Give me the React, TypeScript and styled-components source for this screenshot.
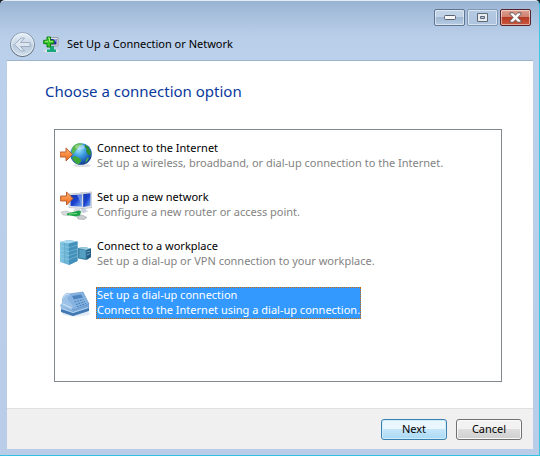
import React, { useState } from "react";
import styled, { createGlobalStyle, css } from "styled-components";

const GlobalStyle = createGlobalStyle`
  *, *::before, *::after { box-sizing: border-box; }
  body { margin: 0; background: #14202c; font-family: "Noto Sans", "Open Sans", sans-serif; font-size: 11px; color: #000; }
  button { font: inherit; }
  svg { display: block; flex: none; }
`;

const Frame = styled.div`
  display: flex;
  flex-direction: column;
  min-height: 100vh;
  padding: 0 6px 6px 7px;
  border-top: 1px solid #e4edf6;
  border-right: 1px solid #3fc3e6;
  border-bottom: 1px solid #35bfe0;
  border-radius: 5px 5px 0 0;
  background: linear-gradient(#98b4d2 0, #a9c1de 16px, #b9cee9 36px, #bbd0ea 60px, #b9cde8 100%);
`;

const TitleBar = styled.header`
  display: flex;
  flex-direction: column;
  height: 59px;
`;

const CaptionButtons = styled.div`
  display: flex;
  justify-content: flex-end;
  align-items: flex-end;
  gap: 2px;
  height: 25px;
  padding-right: 2px;
`;

const CaptionButton = styled.button<{ $kind: "normal" | "disabled" | "close" }>`
  display: flex;
  align-items: center;
  justify-content: center;
  width: 31px;
  height: 17px;
  padding: 0;
  border: 1px solid #60758f;
  border-radius: 2px;
  box-shadow: inset 0 0 0 1px rgba(255, 255, 255, 0.5);
  background: linear-gradient(#c1d3e7 0 45%, #a0b8d3 50%, #b8cde5);
  ${(p) => p.$kind === "disabled" && css`
    border-color: #8299b6;
    background: linear-gradient(#b5cae3, #adc4df);
  `}
  ${(p) => p.$kind === "close" && css`
    border-color: #57232a;
    background: linear-gradient(#dda090 0, #cf8170 45%, #b63b25 50%, #cb573d);
  `}
`;

const Heading = styled.div`
  display: flex;
  align-items: center;
  height: 34px;
  padding: 2px 0 0 2px;
  gap: 7px;
`;

const BackButton = styled.button`
  width: 27px;
  height: 27px;
  padding: 0;
  border: 0;
  background: none;
`;

const WindowTitle = styled.h1`
  margin: 0;
  font-size: 11px;
  line-height: 16px;
  font-weight: 400;
`;

const Page = styled.main`
  display: flex;
  flex: 1;
  flex-direction: column;
  padding: 18px 31px 26px 47px;
  border-top: 1px solid #9fb3cc;
  background: #fff;
`;

const Question = styled.h2`
  margin: 0 0 26px -9px;
  font-size: 15px;
  line-height: 24px;
  font-weight: 400;
  color: #0a3a9c;
`;

const OptionList = styled.div`
  display: flex;
  flex: 1;
  flex-direction: column;
  gap: 17px;
  padding: 10px 5px;
  border: 1px solid #828790;
`;

const Option = styled.button`
  display: flex;
  align-items: center;
  gap: 4px;
  padding: 0;
  border: 0;
  background: none;
  text-align: left;
  outline: none;
`;

const OptionText = styled.span<{ $selected: boolean }>`
  display: flex;
  flex-direction: column;
  gap: 1px;
  padding-bottom: 1px;
  border: 1px dotted ${(p) => (p.$selected ? "#cc6600" : "transparent")};
  line-height: 14px;
  white-space: nowrap;
  color: ${(p) => (p.$selected ? "#fff" : "#000")};
  background: ${(p) => (p.$selected ? "#3399ff" : "transparent")};
`;

const Description = styled.span<{ $selected: boolean }>`
  color: ${(p) => (p.$selected ? "#fff" : "#838383")};
`;

const Footer = styled.footer`
  display: flex;
  justify-content: flex-end;
  align-items: center;
  gap: 9px;
  height: 41px;
  padding-right: 11px;
  border-top: 1px solid #dfdfdf;
  background: #f0f0f0;
`;

const PushButton = styled.button<{ $primary?: boolean }>`
  width: 66px;
  height: 21px;
  padding: 0;
  border: 1px solid ${(p) => (p.$primary ? "#3c7fb1" : "#707070")};
  border-radius: 3px;
  line-height: 16px;
  color: #000;
  box-shadow: inset 0 0 0 1px ${(p) => (p.$primary ? "#cfeefc" : "#fafafa")};
  background: ${(p) =>
    p.$primary
      ? "linear-gradient(#eaf6fd 0 50%, #c4e5f8 50%, #a9daf5)"
      : "linear-gradient(#f2f2f2 0 50%, #dddddd 50%, #cfcfcf)"};
`;

const BackIcon = () => (
  <svg width="27" height="27" viewBox="0 0 27 27" aria-hidden="true">
    <defs>
      <linearGradient id="back" x2="0" y2="1">
        <stop stopColor="#e8f0f8" /><stop offset=".48" stopColor="#c9d7e7" />
        <stop offset=".52" stopColor="#b8c9dc" /><stop offset="1" stopColor="#d3e0ee" />
      </linearGradient>
      <linearGradient id="rim" x2="0" y2="1">
        <stop stopColor="#8ea1b6" /><stop offset="1" stopColor="#4e5d6e" />
      </linearGradient>
    </defs>
    <circle cx="13.5" cy="13.5" r="12" fill="url(#back)" stroke="url(#rim)" />
    <circle cx="13.5" cy="13.5" r="11" fill="none" stroke="#eef4fa" strokeOpacity=".8" />
    <path d="M5.5 13.500 12 7h3.500l-4 4.500H21v4h-9.500l4 4.500H12Z" fill="#dce6f1" stroke="#98a8bb" strokeWidth=".9" />
  </svg>
);

const NetworkPlusIcon = () => (
  <svg width="17" height="17" viewBox="0 0 17 17" aria-hidden="true">
    <ellipse cx="8.500" cy="15" rx="8" ry="1.600" fill="#dfe5e8" />
    <path d="M5 1.500h10v8.500H5z" fill="#e6e6dc" stroke="#7c8590" strokeWidth=".7" />
    <path d="M6.500 3h7v5.500h-7z" fill="#2020b0" />
    <path d="M10 3h3.500v3.500Z" fill="#8c9cf0" />
    <path d="M7 10h4v3.500h2V16H4v-2.500h3Z" fill="#16a878" />
    <path d="M4 1h3.500v3.300H11v3.400H7.500V11H4V7.700H.700V4.300H4Z" fill="#38c828" stroke="#0c7c14" />
    <path d="M5 2h1.500v3.300H10M2 5.300h3" fill="none" stroke="#a8f080" />
  </svg>
);

const OrangeArrow = () => (
  <path d="M.6 5h5.900V.900L13 7.500 6.500 14v-4H.6Z" fill="url(#orange)" stroke="#b6572a" strokeWidth=".9" />
);

const SharedPaint = () => (
  <svg width="0" height="0" aria-hidden="true">
    <defs>
      <linearGradient id="orange" x2="0" y2="1">
        <stop stopColor="#ffb778" /><stop offset=".5" stopColor="#f98c42" /><stop offset="1" stopColor="#ee6b20" />
      </linearGradient>
      <radialGradient id="ocean" cx=".4" cy=".3" r=".75">
        <stop stopColor="#9fe2fa" /><stop offset=".4" stopColor="#3f9fe2" />
        <stop offset=".8" stopColor="#1952b0" /><stop offset="1" stopColor="#123478" />
      </radialGradient>
      <linearGradient id="screen" x2="1" y2="1">
        <stop stopColor="#1238a8" /><stop offset=".5" stopColor="#1c42d0" /><stop offset="1" stopColor="#7db4f4" />
      </linearGradient>
      <linearGradient id="server" x2="1">
        <stop stopColor="#83c5e2" /><stop offset="1" stopColor="#4a9cc4" />
      </linearGradient>
      <linearGradient id="phone" x2="1" y2="1">
        <stop stopColor="#b4d3f0" /><stop offset="1" stopColor="#568cc8" />
      </linearGradient>
    </defs>
  </svg>
);

const GlobeIcon = () => (
  <svg width="32" height="32" viewBox="0 0 32 32" aria-hidden="true">
    <ellipse cx="22" cy="25.500" rx="9" ry="1.600" fill="#dde1e6" />
    <circle cx="21" cy="14" r="10.800" fill="url(#ocean)" />
    <path d="M12.500 7.500C14 5 17 3.200 20 3.300l3 .7-2 1.500-2 .5-1.500 3-2 1.500-2 3.500-2-1.500Z" fill="#58b848" />
    <path d="m25 4.500 3.500 2.500 2.500 5-.5 3.500-2.500-1-2-3 .5-3-2-1.500Z" fill="#2c8c30" />
    <path d="m12 17.500 3-1.500 5 2.500 1.500 2-2.500 3.800c-3.500-.5-6-3.500-7-6.800Z" fill="#3ca83c" />
    <path d="m27 18 2-.5-2 4-2 1Z" fill="#49b148" />
    <ellipse cx="20" cy="7" rx="5" ry="2.500" fill="#fff" opacity=".35" />
    <g transform="translate(-.5 7)"><OrangeArrow /></g>
  </svg>
);

const NewNetworkIcon = () => (
  <svg width="32" height="32" viewBox="0 0 32 32" aria-hidden="true">
    <path d="M20 4 32 3v15.500l-11 1.500Z" fill="#e5e7e8" stroke="#a8afb8" strokeWidth=".6" />
    <path d="m23 5 7.500-.700v12.500L23 18Z" fill="url(#screen)" />
    <path d="m22 20 4-1v2.500l3 .5-5 2-5-1Z" fill="#c8d1de" />
    <path d="M9 5 23 4v15.500L9 18.500Z" fill="#edf0f2" stroke="#a8afb8" strokeWidth=".6" />
    <path d="m10.500 6 11.500-.500v12.300l-11.500-.800Z" fill="url(#screen)" />
    <path d="m17 6 5-.5v11Z" fill="#a9c7f5" opacity=".5" />
    <path d="m15 19 5 .5v2l3 1-4 1.500-6-2Z" fill="#d7dbe1" />
    <path d="m1 23 5-1 5 1.500-2 3-6-.5Z" fill="#d7dadb" stroke="#b2b7ba" strokeWidth=".6" />
    <path d="m7 24.500 6-1.500 6-1.500 2 1-1 4.500-4 .5-9-1.500Z" fill="#1da44a" />
    <path d="m9 25 8-.5" stroke="#72df80" strokeWidth="1.200" />
    <path d="m17 27.500 5-1.500 5 2.500-3 2-6-.5Z" fill="#c9cdce" stroke="#9ca3a6" strokeWidth=".6" />
    <g transform="translate(0 2)"><OrangeArrow /></g>
  </svg>
);

const ServersIcon = () => (
  <svg width="32" height="32" viewBox="0 0 32 32" aria-hidden="true">
    <path d="m0 4 8-2 9.500 1.500V23L9 27l-9-3Z" fill="url(#server)" />
    <path d="m0 4 9 1.500 8.500-2L8 2Z" fill="#a9daf0" />
    <path d="m9 5.500 8.500-2V23L9 27Z" fill="#4390ba" />
    <path d="m0 8 9 1.500M0 12l9 1.500M0 16l9 1.500M0 20l9 1.500m0-12 8.500-2.500M9 13.500l8.500-2.500M9 17.500l8.500-3M9 21.500l8.500-3.500" stroke="#a5d8ee" strokeWidth=".7" opacity=".6" />
    <path d="M4.500 5v20" stroke="#428daf" strokeWidth=".6" opacity=".5" />
    <path d="m18 10 6-1 7 1.500V19l-5 3-8-1.500Z" fill="#4087aa" />
    <path d="m18 10 6-1 7 1.500-4.500 1.500Z" fill="#9dccdf" />
    <path d="m19.500 11.500 6 1v8l-6-1Z" fill="#559fc2" />
    <path d="m26.500 12 4.500-1.500V19L26.500 22Z" fill="#275f84" />
    <path d="m27 14 3-1m-3 4 3-1.500" stroke="#69a9c8" />
  </svg>
);

const FaxIcon = () => (
  <svg width="32" height="32" viewBox="0 0 32 32" aria-hidden="true">
    <ellipse cx="16" cy="26.500" rx="14" ry="3" fill="#e1ebf5" />
    <path d="M0 18 4 14 24 11l5 6v6L13 29 2 25Z" fill="url(#phone)" />
    <path d="m1 22 12 4 16-5v3l-16 5L1 25Z" fill="#4379b3" />
    <path d="M9 7 23 5l6 12-16 6L7 16Z" fill="#86b3e0" stroke="#5c8fc6" strokeWidth=".6" />
    <path d="m12 9 9-1.500 2 3-9 2Z" fill="#4e83bd" />
    <path d="m14.500 15 9-2.500M16 17.500l9-3M17 19.800l9-3.300" stroke="#4b80bd" strokeWidth="1.100" strokeDasharray="1.800 1" />
    <path d="M2 11C4 7 7 5 9 6l1.500 2-2.500 2v3l5 6-1.500 4L2 18Z" fill="#9cc2e8" />
    <path d="M2.500 11.500C4 9 6 7 9 7M3 17l8.500 4" fill="none" stroke="#d5e8f9" />
    <path d="m2 21.500 11 4 15-5" fill="none" stroke="#b4d4f2" />
  </svg>
);

const options = [
  { id: "internet", title: "Connect to the Internet", text: "Set up a wireless, broadband, or dial-up connection to the Internet.", Icon: GlobeIcon },
  { id: "network", title: "Set up a new network", text: "Configure a new router or access point.", Icon: NewNetworkIcon },
  { id: "workplace", title: "Connect to a workplace", text: "Set up a dial-up or VPN connection to your workplace.", Icon: ServersIcon },
  { id: "dialup", title: "Set up a dial-up connection", text: "Connect to the Internet using a dial-up connection.", Icon: FaxIcon },
];

export default function App() {
  const [selected, setSelected] = useState("dialup");
  return (
    <>
      <GlobalStyle />
      <Frame>
        <TitleBar>
          <CaptionButtons>
            <CaptionButton $kind="normal" aria-label="Minimize">
              <svg width="12" height="5" viewBox="0 0 12 5"><rect x=".5" y=".5" width="11" height="4" rx="1" fill="#f7f7f7" stroke="#59616d" /></svg>
            </CaptionButton>
            <CaptionButton $kind="disabled" aria-label="Maximize" disabled>
              <svg width="11" height="9" viewBox="0 0 11 9"><path d="M.5.500h10v8H.5ZM3.500 3.500v2h4v-2Z" fill="#e8edf2" fillRule="evenodd" stroke="#5f6873" /></svg>
            </CaptionButton>
            <CaptionButton $kind="close" aria-label="Close">
              <svg width="13" height="11" viewBox="0 0 13 11"><path d="M1 .8h3.200L6.500 3 8.800.8H12v1.400L8.900 5.500 12 8.800v1.400H8.800L6.500 8l-2.300 2.200H1V8.800l3.100-3.300L1 2.200Z" fill="#fafafa" stroke="#5c4a52" strokeWidth=".9" /></svg>
            </CaptionButton>
          </CaptionButtons>
          <Heading>
            <BackButton aria-label="Back" disabled><BackIcon /></BackButton>
            <NetworkPlusIcon />
            <WindowTitle>Set Up a Connection or Network</WindowTitle>
          </Heading>
        </TitleBar>
        <Page>
          <Question id="question">Choose a connection option</Question>
          <OptionList role="listbox" aria-labelledby="question">
            {options.map(({ id, title, text, Icon }) => (
              <Option key={id} role="option" aria-selected={selected === id} onClick={() => setSelected(id)}>
                <Icon />
                <OptionText $selected={selected === id}>
                  <span>{title}</span>
                  <Description $selected={selected === id}>{text}</Description>
                </OptionText>
              </Option>
            ))}
          </OptionList>
        </Page>
        <Footer>
          <PushButton $primary>Next</PushButton>
          <PushButton>Cancel</PushButton>
        </Footer>
      </Frame>
      <SharedPaint />
    </>
  );
}
